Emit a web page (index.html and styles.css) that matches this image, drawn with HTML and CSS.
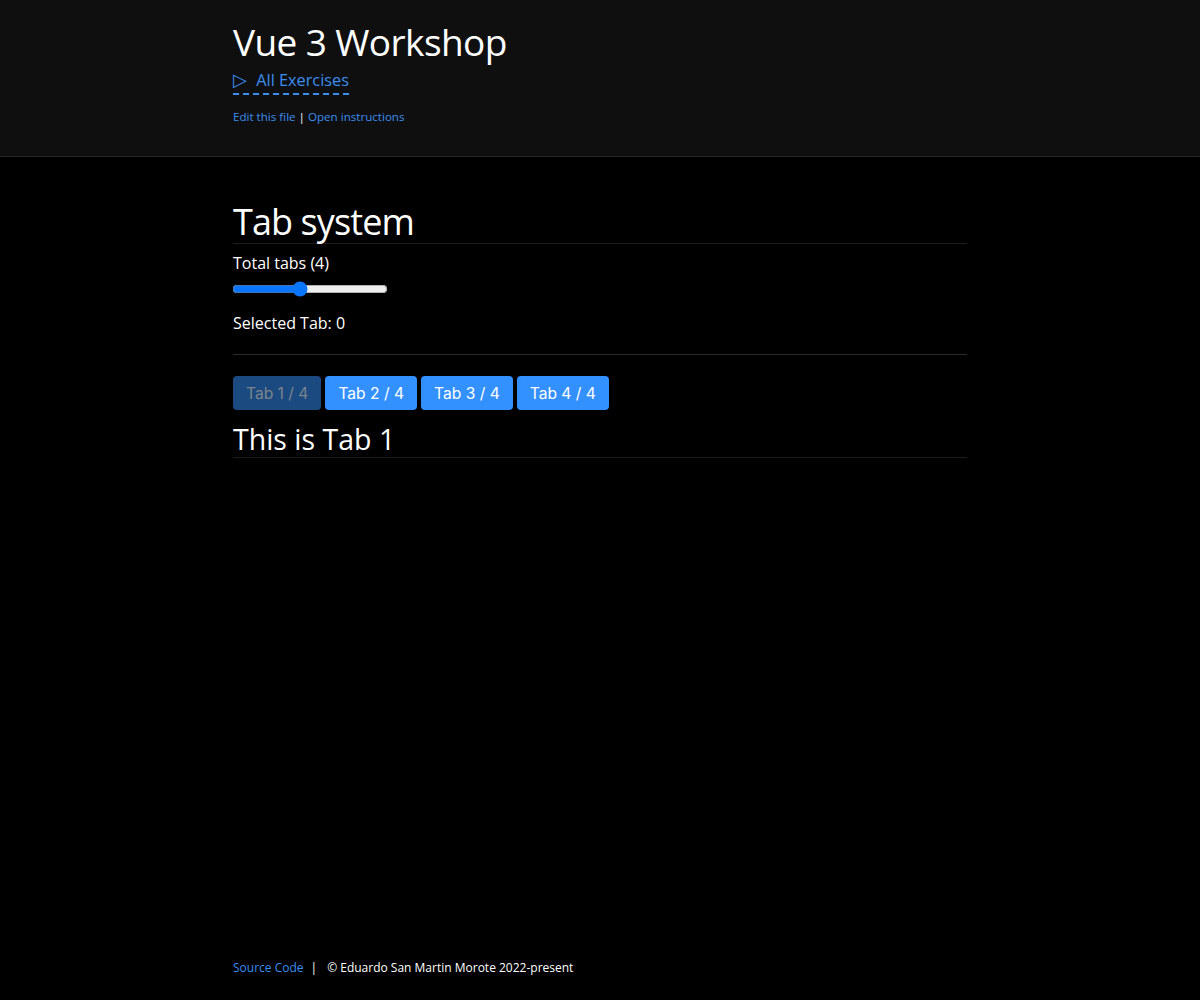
FILE: index.html
```html
<!DOCTYPE html>
<html lang="en">
<head>
<meta charset="utf-8">
<title>Vue 3 Workshop</title>
<link rel="stylesheet" href="styles.css">
</head>
<body>
<header class="site-header">
  <div class="container">
    <h1 class="site-title">Vue 3 Workshop</h1>
    <a class="all-ex" href="#"><span class="tri">▷</span> All Exercises</a>
    <div class="file-links"><a href="#">Edit this file</a> | <a href="#">Open instructions</a></div>
  </div>
</header>
<main class="container main">
  <h1 class="page-title">Tab system</h1>
  <label class="label">Total tabs (4)</label>
  <input class="range" type="range" min="1" max="8" value="4">
  <p class="selected">Selected Tab: 0</p>
  <hr class="sep">
  <div class="tabs">
    <button class="tab" disabled>Tab 1 / 4</button>
    <button class="tab">Tab 2 / 4</button>
    <button class="tab">Tab 3 / 4</button>
    <button class="tab">Tab 4 / 4</button>
  </div>
  <h2 class="tab-title">This is Tab 1</h2>
</main>
<footer class="container footer">
  <a href="#">Source Code</a><span class="bar">|</span><span>© Eduardo San Martin Morote 2022-present</span>
</footer>
</body>
</html>
```
FILE: styles.css
```css
html, body { margin: 0; padding: 0; }
body {
  background: #000;
  color: #fff;
  font-family: "Open Sans", "Noto Sans", sans-serif;
  min-height: 1000px;
  display: flex;
  flex-direction: column;
}
a { color: #3a8ef0; text-decoration: none; }
.container { width: 734px; margin: 0 auto; }
.site-header {
  background: #0f0f0f;
  border-bottom: 1px solid #262626;
  height: 157px;
  box-sizing: border-box;
}
.site-header .container { display: flex; flex-direction: column; align-items: flex-start; }
.site-title {
  font-size: 37px;
  font-weight: 400;
  margin: 18px 0 0;
  line-height: 48px;
  letter-spacing: -0.6px;
}
.all-ex {
  font-size: 16.3px;
  line-height: 24px;
  margin-top: 2px;
  border-bottom: 2px dashed #3a8ef0;
  padding-bottom: 1px;
}
.tri { margin-right: 5px; font-size: 18px; line-height: 1; }
.file-links { font-size: 11.6px; margin-top: 14px; color: #fff; }
.main { flex: 1; }
.page-title {
  font-size: 36px;
  font-weight: 400;
  margin: 44px 0 0;
  line-height: 42px;
  letter-spacing: -0.9px;
  border-bottom: 1px solid #1c1c1c;
}
.label { display: block; font-size: 16px; margin-top: 8px; line-height: 22px; }
.range {
  display: block;
  width: 156px;
  margin: 7px 0 0 -1px;
  accent-color: #0a75ff;
}
.selected { font-size: 16px; margin: 15px 0 0; line-height: 22px; }
.sep { border: 0; border-top: 1px solid #2a2a2a; margin: 20px 0 0; }
.tabs { display: flex; gap: 4px; margin-top: 21px; }
.tab {
  font-family: Inter, "Noto Sans", sans-serif;
  font-size: 15.6px;
  background: #3391ff;
  color: #fff;
  border: 0;
  border-radius: 4px;
  height: 34px;
  padding: 0 13px;
}
.tab:disabled { background: #1a4a80; color: #7d848c; }
.tab-title {
  font-size: 28.5px;
  font-weight: 400;
  margin: 11px 0 0;
  line-height: 36px;
  border-bottom: 1px solid #1c1c1c;
}
.footer { font-size: 12px; padding: 0 0 24px; line-height: 16px; }
.bar { margin: 0 10px 0 7px; }
```
